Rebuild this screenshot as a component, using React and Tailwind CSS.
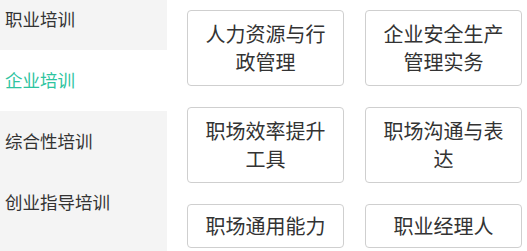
const categories = ["职业培训", "企业培训", "综合性培训", "创业指导培训"];

const courses = [
  ["人力资源与行", "政管理"],
  ["企业安全生产", "管理实务"],
  ["职场效率提升", "工具"],
  ["职场沟通与表", "达"],
  ["职场通用能力"],
  ["职业经理人"],
];

const App = () => {
  const active = 1;
  return (
    <div
      className="flex w-[527px] h-[251px] overflow-hidden bg-white"
      style={{ fontFamily: '"Noto Sans CJK SC", "Noto Sans", sans-serif' }}
    >
      {/* left menu */}
      <div className="w-[167px] shrink-0 bg-[#f4f4f4]">
        <div className="-mt-[11px]">
          {categories.map((name, index) => (
            <div
              key={index}
              className={`h-[61px] flex items-center pl-[5px] text-[17.5px] ${
                index === active ? "bg-white text-[#2ec4a0]" : "text-[#333]"
              }`}
            >
              {name}
            </div>
          ))}
        </div>
      </div>

      {/* course grid */}
      <div className="flex-1 pl-[20px] pr-[5px] pt-[10px] grid grid-cols-2 gap-x-[21px] gap-y-[21px] content-start">
        {courses.map((lines, index) => (
          <div
            key={index}
            className={`border border-[#cfcfcf] rounded-[4px] flex flex-col items-center justify-center text-[20px] leading-[28px] text-[#333] ${
              index < 4 ? "h-[76px]" : "h-[44px]"
            }`}
          >
            {lines.map((line, i) => (
              <span key={i}>{line}</span>
            ))}
          </div>
        ))}
      </div>
    </div>
  );
};

export default App;
